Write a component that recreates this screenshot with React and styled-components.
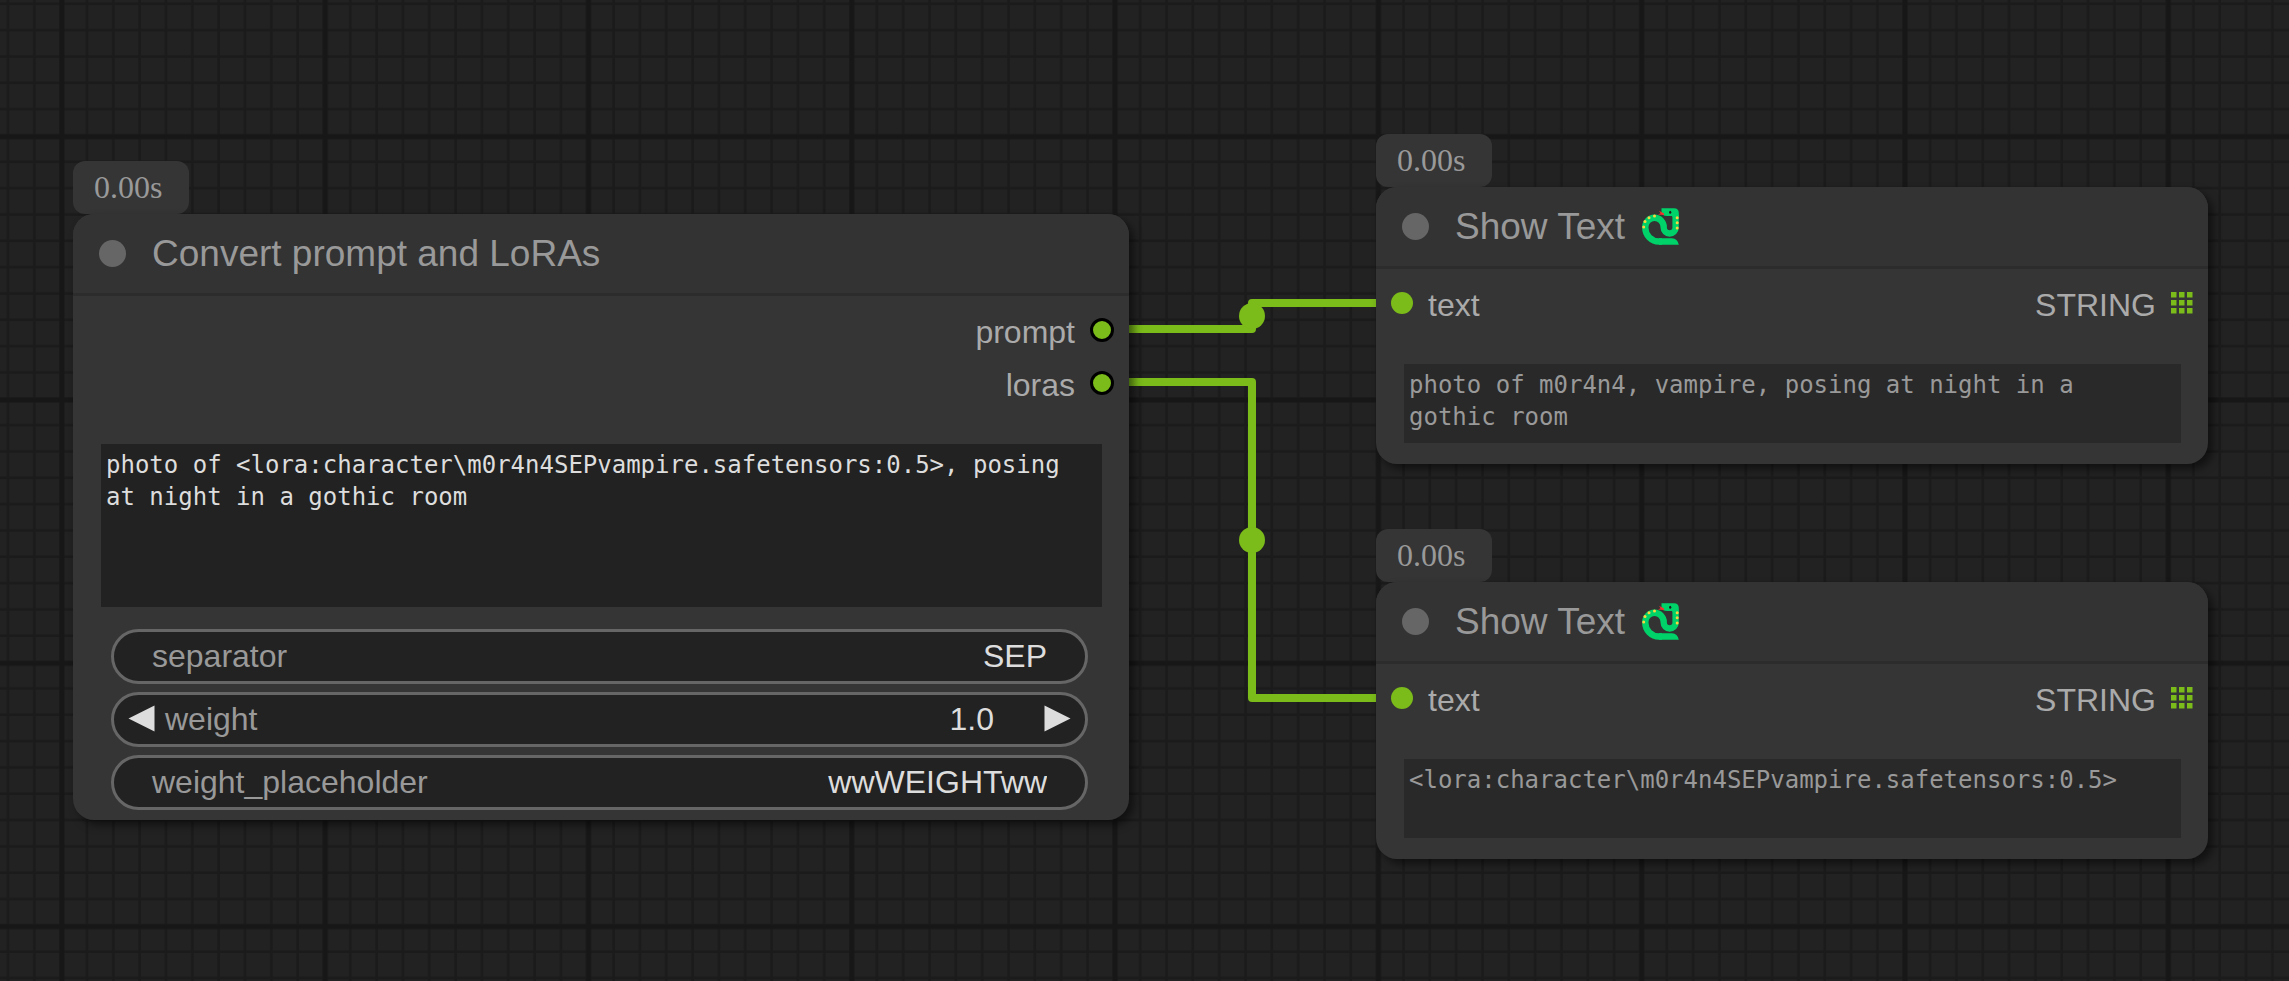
import React from 'react';
import styled, { createGlobalStyle } from 'styled-components';

const sans = '"Liberation Sans", Arial, sans-serif';
const serif = '"Liberation Serif", "Times New Roman", serif';
const mono = '"DejaVu Sans Mono", monospace';

const GlobalStyle = createGlobalStyle`
  * { box-sizing: border-box; }
  body { margin: 0; background: #222; }
`;

const Board = styled.main`
  position: relative;
  min-height: 100vh;
  overflow: hidden;
  font-family: ${sans};
`;

const Layer = styled.svg`
  position: absolute;
  inset: 0;
  width: 100%;
  height: 100%;
`;

const Node = styled.article`
  position: absolute;
  left: ${(p) => p.$x}px;
  top: ${(p) => p.$y}px;
  width: ${(p) => p.$w}px;
`;

const Badge = styled.div`
  width: 116px;
  height: 53px;
  padding-left: 21px;
  border-radius: 12px;
  background: #353535;
  color: #999;
  font: 32px/52px ${serif};
`;

const Card = styled.section`
  padding-bottom: ${(p) => p.$bottom}px;
  border-radius: 21px;
  background: #353535;
  box-shadow: 5px 5px 8px rgba(0, 0, 0, 0.5);
`;

const Header = styled.header`
  display: flex;
  align-items: center;
  height: 82px;
  padding: 0 26px;
  border-bottom: 3px solid #2c2c2c;
  border-radius: 21px 21px 0 0;
  background: #333;
`;

const Status = styled.span`
  width: 27px;
  height: 27px;
  margin-right: 26px;
  border-radius: 50%;
  background: #666;
`;

const Title = styled.h2`
  margin: 0;
  color: #999;
  font-size: 37px;
  font-weight: 400;
  line-height: 40px;
`;

const Snake = styled.svg`
  width: 37px;
  height: 37px;
  margin-left: 17px;
`;

const Slots = styled.div`
  display: flex;
  justify-content: space-between;
  padding: 7px 15px 11px;
`;

const SlotColumn = styled.ul`
  margin: 0;
  padding: 0;
  list-style: none;
`;

const Slot = styled.li`
  display: flex;
  align-items: center;
  justify-content: flex-end;
  gap: 15px;
  height: 53px;
  color: #aaa;
  font-size: 32px;
`;

const SlotName = styled.span`
  padding-top: 5px;
  line-height: 40px;
`;

const Port = styled.span`
  width: ${(p) => (p.$linked ? 24 : 22)}px;
  height: ${(p) => (p.$linked ? 24 : 22)}px;
  border: ${(p) => (p.$linked ? '3px solid #000' : '0')};
  border-radius: 50%;
  background: #7bbb1a;
`;

const GridPort = styled.svg`
  width: 22px;
  height: 22px;
`;

const Prompt = styled.textarea`
  display: block;
  width: ${(p) => (p.readOnly ? 777 : 1001)}px;
  height: ${(p) => (p.readOnly ? 79 : 163)}px;
  margin: 24px 28px 0;
  padding: 5px 20px 5px 5px;
  border: 0;
  outline: 0;
  resize: none;
  overflow: hidden;
  background: ${(p) => (p.readOnly ? '#292929' : '#222')};
  color: ${(p) => (p.readOnly ? '#999' : '#ddd')};
  font: 24px/32px ${mono};
`;

const Widgets = styled.div`
  display: grid;
  gap: 8px;
  margin: 22px 41px 0 38px;
`;

const Widget = styled.div`
  display: flex;
  align-items: center;
  height: 55px;
  padding: 0 ${(p) => (p.$stepper ? 14 : 38)}px 2px;
  border: 3px solid #666;
  border-radius: 28px;
  background: #222;
  font-size: 32px;
`;

const WidgetLabel = styled.label`
  color: #999;
  line-height: 40px;
`;

const WidgetInput = styled.input`
  flex: 1;
  min-width: 0;
  height: 40px;
  padding: 0;
  border: 0;
  outline: 0;
  background: none;
  color: #ddd;
  font: 32px/40px ${sans};
  text-align: right;
`;

const Step = styled.button`
  display: flex;
  margin: ${(p) => (p.$next ? '0 0 0 50px' : '0 10px 0 0')};
  padding: 0;
  border: 0;
  background: none;
  color: #ddd;
`;

const Triangle = ({ next }) => (
  <svg width="27" height="27" viewBox="0 0 27 27" aria-hidden="true">
    <path d={next ? 'M0.5 0.5 L26.5 13.5 L0.5 26.5Z' : 'M26.5 0.5 L0.5 13.5 L26.5 26.5Z'} fill="currentColor" />
  </svg>
);

const SnakeIcon = () => (
  <Snake viewBox="0 0 37 37" role="img" aria-label="snake">
    <path
      d="M33.6 7 V19.6 A5.95 5.95 0 0 1 21.7 19.6 V19 A9.2 9.2 0 0 0 3.3 19 V19.8 A13.7 13.7 0 0 0 17 33.5 H20"
      fill="none"
      stroke="#00d26a"
      strokeWidth="6.4"
    />
    <path d="M17 30.3 H30 Q35.5 30.8 36.8 36.7 H17Z" fill="#00d26a" />
    <path d="M19.5 0.3 H32 Q36.8 0.3 36.8 5 V9 H30.4 V7.9 H25.5 Q19.5 7.9 19.5 4Z" fill="#00d26a" />
    <path d="M22 5.6 L17 2.8 L18.6 5.2 L16 6.6 L22 7Z" fill="#f8312f" />
    <ellipse cx="28.2" cy="4.3" rx="1.1" ry="1.5" fill="#1c1c1c" />
    <g fill="#fcd53f">
      <circle cx="1.7" cy="19" r="1.5" />
      <circle cx="3" cy="13.6" r="1.5" />
      <circle cx="7" cy="9.7" r="1.5" />
      <circle cx="12.5" cy="8" r="1.5" />
      <circle cx="35.2" cy="9.7" r="1.5" />
      <circle cx="35.2" cy="14.8" r="1.5" />
      <circle cx="35.2" cy="20" r="1.5" />
    </g>
  </Snake>
);

const GridPortIcon = () => (
  <GridPort viewBox="0 0 22 22" aria-hidden="true">
    {[0, 8, 16].map((y) =>
      [0, 8, 16].map((x) => <rect key={`${x}-${y}`} x={x} y={y} width="5.5" height="5.5" fill="#7bbb1a" />)
    )}
  </GridPort>
);

const gridTransform = 'translate(62 136.8) scale(2.633)';

const Grid = () => (
  <Layer aria-hidden="true">
    <defs>
      <pattern id="minor" width="10" height="10" patternUnits="userSpaceOnUse" patternTransform={gridTransform}>
        <path d="M0 9.5 H10 M9.5 0 V10" stroke="#1b1b1b" strokeWidth="1" />
      </pattern>
      <pattern id="major" width="100" height="100" patternUnits="userSpaceOnUse" patternTransform={gridTransform}>
        <path d="M0 0 H100 M0 100 H100 M0 0 V100 M100 0 V100" stroke="#171717" strokeWidth="1.9" />
      </pattern>
    </defs>
    <rect width="100%" height="100%" fill="url(#minor)" />
    <rect width="100%" height="100%" fill="url(#major)" />
  </Layer>
);

const Links = () => (
  <Layer aria-hidden="true">
    <g fill="none" strokeLinejoin="round">
      {['M1102 329 H1252 V303 H1402', 'M1102 382 H1252 V698 H1402'].map((d) => (
        <path key={d} d={d} stroke="#7bbb1a" strokeWidth="8" />
      ))}
    </g>
    <circle cx="1252" cy="316" r="13" fill="#7bbb1a" />
    <circle cx="1252" cy="540" r="13" fill="#7bbb1a" />
  </Layer>
);

const ShowText = ({ x, y, name, value }) => (
  <Node $x={x} $y={y} $w={832}>
    <Badge>0.00s</Badge>
    <Card $bottom={21}>
      <Header>
        <Status />
        <Title>Show Text</Title>
        <SnakeIcon />
      </Header>
      <Slots>
        <SlotColumn>
          <Slot>
            <Port />
            <SlotName>text</SlotName>
          </Slot>
        </SlotColumn>
        <SlotColumn>
          <Slot>
            <SlotName>STRING</SlotName>
            <GridPortIcon />
          </Slot>
        </SlotColumn>
      </Slots>
      <Prompt readOnly aria-label={name} value={value} />
    </Card>
  </Node>
);

export default function App() {
  return (
    <>
      <GlobalStyle />
      <Board>
        <Grid />
        <Links />
        <Node $x={73} $y={161} $w={1056}>
          <Badge>0.00s</Badge>
          <Card $bottom={10}>
            <Header>
              <Status />
              <Title>Convert prompt and LoRAs</Title>
            </Header>
            <Slots>
              <span />
              <SlotColumn>
                <Slot>
                  <SlotName>prompt</SlotName>
                  <Port $linked />
                </Slot>
                <Slot>
                  <SlotName>loras</SlotName>
                  <Port $linked />
                </Slot>
              </SlotColumn>
            </Slots>
            <Prompt
              aria-label="prompt"
              spellCheck={false}
              defaultValue={'photo of <lora:character\\m0r4n4SEPvampire.safetensors:0.5>, posing at night in a gothic room'}
            />
            <Widgets>
              <Widget>
                <WidgetLabel htmlFor="separator">separator</WidgetLabel>
                <WidgetInput id="separator" defaultValue="SEP" />
              </Widget>
              <Widget $stepper>
                <Step type="button" aria-label="Decrease weight">
                  <Triangle />
                </Step>
                <WidgetLabel htmlFor="weight">weight</WidgetLabel>
                <WidgetInput id="weight" inputMode="decimal" defaultValue="1.0" />
                <Step $next type="button" aria-label="Increase weight">
                  <Triangle next />
                </Step>
              </Widget>
              <Widget>
                <WidgetLabel htmlFor="placeholder">weight_placeholder</WidgetLabel>
                <WidgetInput id="placeholder" defaultValue="wwWEIGHTww" />
              </Widget>
            </Widgets>
          </Card>
        </Node>
        <ShowText
          x={1376}
          y={134}
          name="Prompt text"
          value="photo of m0r4n4, vampire, posing at night in a gothic room"
        />
        <ShowText
          x={1376}
          y={529}
          name="LoRA text"
          value={'<lora:character\\m0r4n4SEPvampire.safetensors:0.5>'}
        />
      </Board>
    </>
  );
}
